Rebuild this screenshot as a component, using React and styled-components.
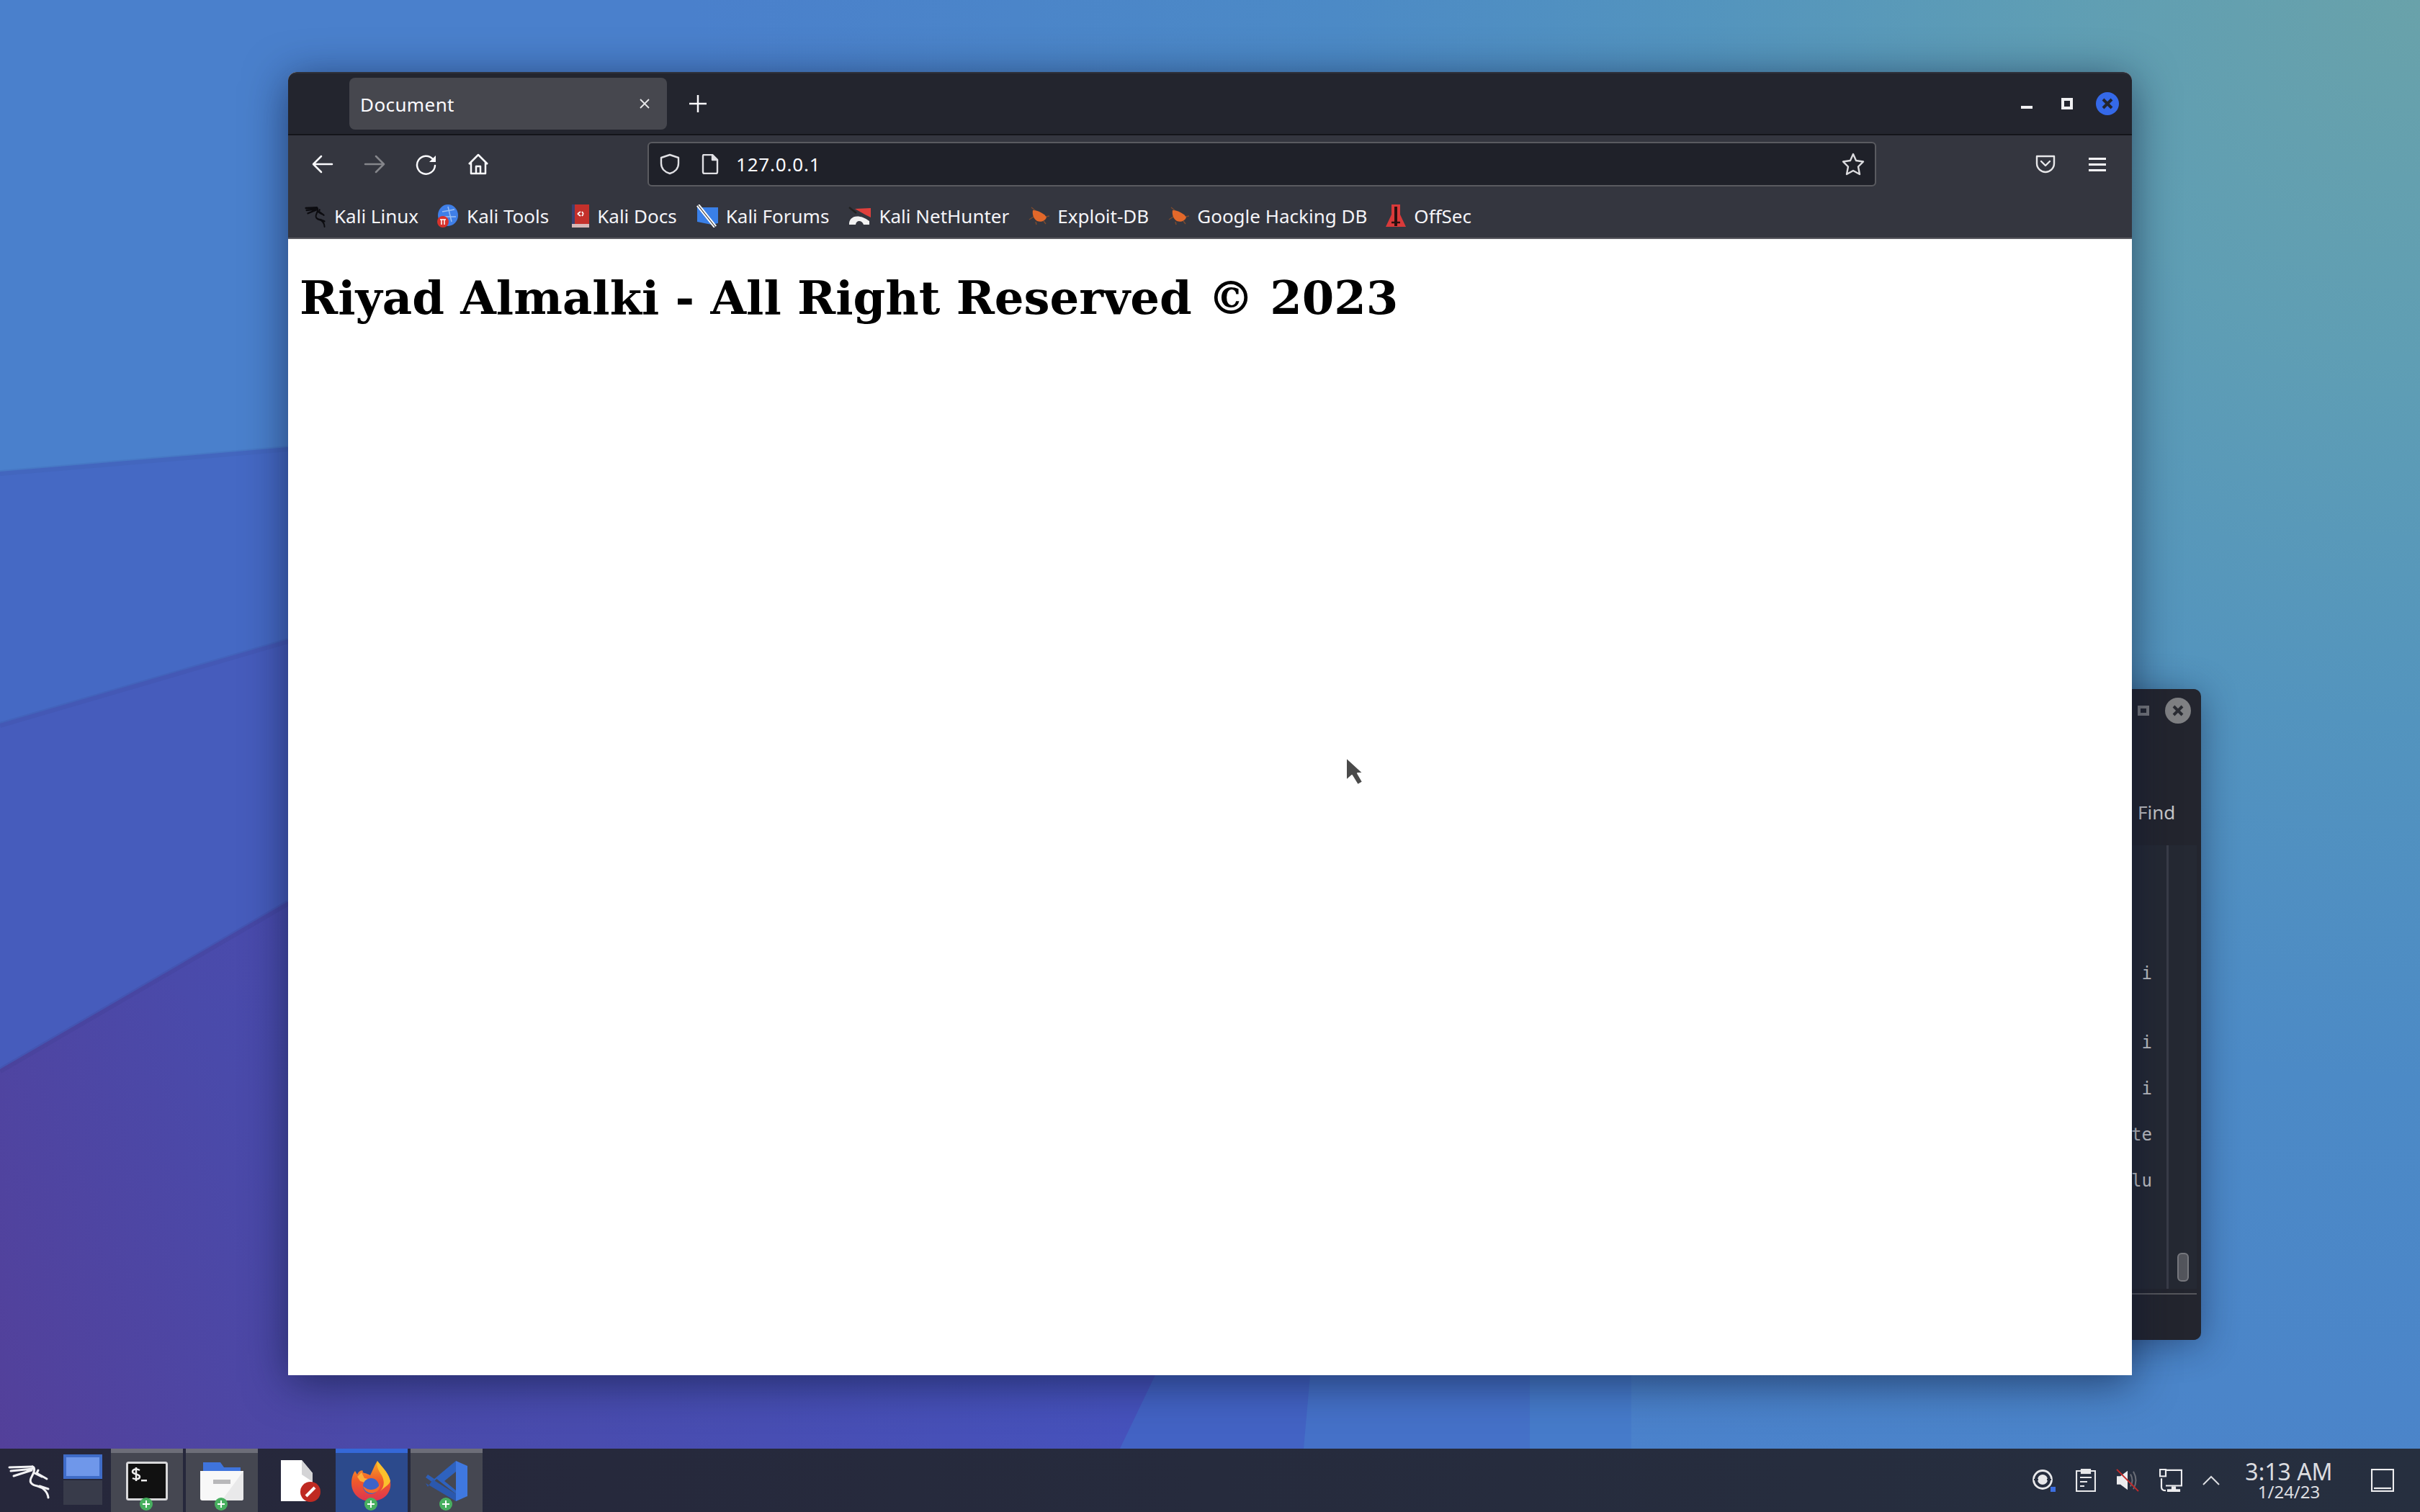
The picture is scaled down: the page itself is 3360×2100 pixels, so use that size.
import styled, { createGlobalStyle } from "styled-components"

const Global = createGlobalStyle`
html, body {
  margin: 0;
  padding: 0;
  background: #23252e;
}
* {
  box-sizing: border-box;
}
`

const Desktop = styled.div`
position: relative;
width: 3360px;
height: 2100px;
overflow: hidden;
display: flex;
flex-direction: column;
font-family: "Noto Sans", sans-serif;
background: radial-gradient(circle at 100% 0, #69a2aa 0, #5f9eb4 500px, #5394be 1000px, #4c8ac6 1500px, #4a80cc 2400px);
`

const Wallpaper = styled.svg`
position: absolute;
left: 0;
top: 0;
`

const Workspace = styled.div`
position: relative;
flex: 1;
`

/* window left behind the browser */
const BackWindow = styled.div`
position: absolute;
left: 2900px;
top: 957px;
width: 156px;
height: 904px;
display: flex;
flex-direction: column;
background: #23252e;
border-radius: 10px;
box-shadow: 0 6px 50px rgba(10, 20, 50, 0.45);
`

const BackTitle = styled.div`
height: 60px;
display: flex;
align-items: center;
justify-content: flex-end;
gap: 22px;
padding-right: 14px;
`

const BackMaximize = styled.span`
width: 16px;
height: 14px;
border: 4px solid #77787c;
`

const BackClose = styled.span`
width: 36px;
height: 36px;
border-radius: 50%;
background: #7f8083;
display: flex;
align-items: center;
justify-content: center;
`

const BackToolbar = styled.div`
height: 157px;
display: flex;
align-items: flex-end;
padding: 0 0 28px 68px;
color: #c9c9cb;
font-size: 26px;
`

const BackEditor = styled.div`
flex: 1;
margin-right: 6px;
background: #252933;
display: flex;
`

const Gutter = styled.div`
width: 111px;
flex: none;
border-right: 3px solid #3a3d48;
padding: 162px 20px 0 0;
font-family: "DejaVu Sans Mono", monospace;
font-size: 24px;
line-height: 32px;
color: #c9cacd;
text-align: right;
white-space: pre;
overflow: hidden;
`

const ScrollTrack = styled.div`
flex: 1;
display: flex;
align-items: flex-end;
justify-content: center;
padding: 0 0 10px 0;
`

const ScrollThumb = styled.div`
width: 16px;
height: 40px;
border-radius: 6px;
background: #53555c;
border: 2px solid #77787e;
`

const BackStatus = styled.div`
height: 65px;
margin: 6px 6px 0 0;
border-top: 2px solid #55565b;
`

/* browser */
const BrowserWindow = styled.div`
position: absolute;
left: 400px;
top: 100px;
width: 2560px;
height: 1810px;
display: flex;
flex-direction: column;
border-radius: 12px 12px 0 0;
background: #fff;
box-shadow: 0 10px 60px rgba(10, 20, 50, 0.6);
`

const TitleBar = styled.div`
height: 88px;
flex: none;
display: flex;
align-items: center;
padding: 0 18px 0 85px;
background: #23252e;
border-top: 2px solid #2e313b;
border-bottom: 2px solid #14151a;
border-radius: 12px 12px 0 0;
`

const Tab = styled.div`
width: 441px;
height: 72px;
display: flex;
align-items: center;
justify-content: space-between;
padding: 0 24px 0 15px;
background: #46474e;
border-radius: 8px;
color: #fbfbfe;
font-size: 26px;
letter-spacing: 0.4px;
`

const TabLabel = styled.span`
padding-top: 2px;
`

const NewTab = styled.svg`
margin-left: 31px;
`

const WindowControls = styled.div`
margin-left: auto;
display: flex;
align-items: center;
gap: 32px;
`

const Minimize = styled.svg`
margin-right: 8px;
`

const Toolbar = styled.div`
height: 80px;
flex: none;
display: flex;
align-items: center;
padding: 0 36px 0 33px;
background: #34363f;
`

const NavGroup = styled.div`
display: flex;
align-items: center;
gap: 42px;
width: 466px;
flex: none;
`

const UrlBar = styled.div`
width: 1706px;
height: 62px;
flex: none;
display: flex;
align-items: center;
padding: 0 14px 0 14px;
background: #1f2129;
border: 2px solid #5a5b60;
border-radius: 6px;
`

const UrlText = styled.span`
margin-left: 24px;
color: #fbfbfe;
font-size: 26px;
letter-spacing: 0.8px;
`

const PageGlyph = styled.svg`
margin-left: 29px;
`

const StarGlyph = styled.svg`
margin-left: auto;
`

const ToolbarEnd = styled.div`
margin-left: auto;
display: flex;
align-items: center;
gap: 46px;
`

const Bookmarks = styled.div`
height: 64px;
flex: none;
display: flex;
align-items: center;
gap: 26px;
padding: 4px 0 2px 23px;
background: #34363f;
border-bottom: 2px solid #5b5b62;
`

const Bookmark = styled.div`
display: flex;
align-items: center;
gap: 11px;
color: #f4f4f8;
font-size: 26px;
white-space: nowrap;
`

const Page = styled.main`
position: relative;
flex: 1;
background: #fff;
padding: 44px 16px 16px;
`

const Heading = styled.h1`
margin: 0;
font-family: "DejaVu Serif", serif;
font-size: 64px;
font-weight: bold;
color: #000;
`

const Cursor = styled.svg`
position: absolute;
left: 1467px;
top: 717px;
`

/* taskbar */
const Taskbar = styled.footer`
position: relative;
height: 88px;
flex: none;
display: flex;
align-items: stretch;
background: linear-gradient(90deg, #26273b, #262f3f);
`

const StartButton = styled.div`
width: 88px;
flex: none;
display: flex;
align-items: center;
padding-left: 10px;
`

const Pager = styled.div`
width: 54px;
flex: none;
display: flex;
flex-direction: column;
gap: 2px;
padding-top: 8px;
`

const PagerDesk = styled.div`
height: 34px;
background: ${p => (p.$active ? "#6f97ea" : "#383b4a")};
border: ${p => (p.$active ? "4px solid #3f6cc8" : "none")};
`

const Tasks = styled.div`
display: flex;
gap: 4px;
margin-left: 12px;
`

const Task = styled.div`
position: relative;
width: 100px;
display: flex;
align-items: center;
justify-content: center;
background: ${p => (p.$active ? "#2c4a8c" : p.$open ? "#454751" : "transparent")};
border-top: 6px solid ${p => (p.$active ? "#3568d8" : p.$open ? "#6d6e78" : "transparent")};
padding-bottom: 4px;
`

const DocIcon = styled.svg`
margin-left: 10px;
`

const PlusBadge = styled.span`
position: absolute;
left: 40px;
bottom: 2px;
width: 18px;
height: 18px;
border-radius: 50%;
background: #48b060;
color: #fff;
&::before, &::after {
  content: "";
  position: absolute;
  background: #fff;
}
&::before {
  left: 4px;
  top: 8px;
  width: 10px;
  height: 2px;
}
&::after {
  left: 8px;
  top: 4px;
  width: 2px;
  height: 10px;
}
`

const Tray = styled.div`
margin-left: auto;
display: flex;
align-items: center;
gap: 28px;
`

const Clock = styled.div`
width: 120px;
margin-left: 8px;
display: flex;
flex-direction: column;
align-items: center;
color: #dcdde0;
`

const ClockTime = styled.span`
font-size: 32px;
line-height: 32px;
white-space: nowrap;
`

const ClockDate = styled.span`
font-size: 24px;
line-height: 24px;
white-space: nowrap;
`

const ShowDesktop = styled.svg`
margin: 0 36px 0 26px;
`

const Dragon = ({ color, width, height, weight = 3 }) => (
  <svg width={width} height={height} viewBox="0 0 62 52" preserveAspectRatio="none" fill="none" stroke={color} strokeWidth={weight} strokeLinecap="round" strokeLinejoin="round">
    <path d="M3 8L35 7M5 13L36 10M9 20L34 12" />
    <path d="M35 7C41 9 35 19 33 23C30 30 36 33 42 34C50 36 56 42 57 50" />
    <path d="M43 12L41 16L55 24M38 16L48 21" />
    <path d="M45 34L57 38" />
  </svg>
)

const Bug = () => (
  <svg width="30" height="26" viewBox="0 0 30 26">
    <path d="M5 1L11 6M2 18L8 14M11 21L12 25M22 20L25 24M25 14L30 13" stroke="#7a4a30" strokeWidth="1.500" />
    <path d="M7 5C14 5 24 10 26 15C24 20 18 22 13 20C8 17 6 11 7 5Z" fill="#e2682a" />
  </svg>
)

const favicons = {
  linux: <Dragon color="#0c0c10" width="30" height="32" weight="4" />,
  tools: (
    <svg width="30" height="32" viewBox="0 0 30 32">
      <ellipse cx="15" cy="15" rx="14" ry="15" fill="#3f7fe8" />
      <path d="M7 10L24 7M10 17L26 17M15 3L20 24" stroke="#9cc0f2" strokeWidth="1.500" />
      <circle cx="8" cy="24" r="8" fill="#d8322c" />
      <path d="M4 21H12M6 21V28M10 21V28" stroke="#fff" strokeWidth="1.500" />
    </svg>
  ),
  docs: (
    <svg width="30" height="32" viewBox="-6 0 30 32">
      <rect x="0" y="0" width="24" height="27" fill="#c4302b" />
      <rect x="0" y="0" width="4" height="27" fill="#3a3f70" />
      <rect x="0" y="27" width="24" height="5" fill="#d8b8b8" />
      <path d="M8 13L12 10M8 13L12 16M16 13L14 10M16 13L14 16" stroke="#fff" strokeWidth="1.800" />
    </svg>
  ),
  forums: (
    <svg width="31" height="32" viewBox="0 0 31 32">
      <path d="M2 4H31V26L22 28L2 24Z" fill="#3a80e8" />
      <path d="M3 1L27 31" stroke="#fff" strokeWidth="5" />
      <path d="M3 1L27 31" stroke="#333" strokeWidth="1.200" />
    </svg>
  ),
  hunter: (
    <svg width="32" height="26" viewBox="0 0 32 26">
      <path d="M10 3L32 2V15L24 11Z" fill="#e0403c" />
      <path d="M2 25C1 14 14 8 30 20V25H22C20 19 12 18 11 25Z" fill="#f2f2f2" />
      <path d="M2 1L12 9" stroke="#222" strokeWidth="2.500" />
    </svg>
  ),
  bug: <Bug />,
  offsec: (
    <svg width="28" height="32" viewBox="0 0 28 32">
      <path d="M8 0H20V14L28 31H0L8 14Z" fill="#d93a3a" />
      <path d="M14 3V30" stroke="#2a1010" strokeWidth="4" />
      <path d="M8 25L20 25" stroke="#2a1010" strokeWidth="2.500" />
    </svg>
  ),
}

const bookmarks = [
  { icon: "linux", label: "Kali Linux" },
  { icon: "tools", label: "Kali Tools" },
  { icon: "docs", label: "Kali Docs" },
  { icon: "forums", label: "Kali Forums" },
  { icon: "hunter", label: "Kali NetHunter" },
  { icon: "bug", label: "Exploit-DB" },
  { icon: "bug", label: "Google Hacking DB" },
  { icon: "offsec", label: "OffSec" },
]

const gutterText = "i\n\n\ni\n\ni\n\nte\n\nlu"

const App = () => {
  return (
    <Desktop>
      <Global />
      <Wallpaper width="3360" height="2100" viewBox="0 0 3360 2100">
        <defs>
          <linearGradient id="deep" gradientUnits="userSpaceOnUse" x1="0" y1="2012" x2="1300" y2="1400">
            <stop offset="0" stopColor="#53409a" />
            <stop offset="0.35" stopColor="#4a4aaa" />
            <stop offset="1" stopColor="#4652bc" />
          </linearGradient>
        </defs>
        <polygon points="0,1000 2265,1000 2265,2012 0,2012" fill="#467bca" />
        <polygon points="0,1000 2124,1000 2124,2012 0,2012" fill="#4571c8" />
        <polygon points="0,1000 1900,1000 1810,2012 0,2012" fill="#4363c4" />
        <polygon points="0,655 400,621 800,600 800,1500 0,1500" fill="#4569c4" />
        <polygon points="0,1005 400,888 800,790 800,1500 0,1500" fill="#465cbc" />
        <polygon points="0,1485 400,1252 1700,1400 1700,1710 1555,2012 0,2012" fill="url(#deep)" />
        <polyline points="0,657 400,623" fill="none" stroke="#3c5aa8" strokeOpacity="0.2" strokeWidth="8" />
        <polyline points="0,1007 400,890" fill="none" stroke="#3c4c9c" strokeOpacity="0.2" strokeWidth="8" />
        <polyline points="0,1487 400,1254" fill="none" stroke="#3c3c8c" strokeOpacity="0.2" strokeWidth="8" />
      </Wallpaper>

      <Workspace>
        <BackWindow>
          <BackTitle>
            <BackMaximize />
            <BackClose>
              <svg width="16" height="16" viewBox="0 0 16 16" stroke="#2a2c33" strokeWidth="4">
                <path d="M2 2L14 14M14 2L2 14" />
              </svg>
            </BackClose>
          </BackTitle>
          <BackToolbar>Find</BackToolbar>
          <BackEditor>
            <Gutter>{gutterText}</Gutter>
            <ScrollTrack>
              <ScrollThumb />
            </ScrollTrack>
          </BackEditor>
          <BackStatus />
        </BackWindow>

        <BrowserWindow>
          <TitleBar>
            <Tab>
              <TabLabel>Document</TabLabel>
              <svg width="14" height="14" viewBox="0 0 14 14" stroke="#e8e8ea" strokeWidth="1.800">
                <path d="M1 1L13 13M13 1L1 13" />
              </svg>
            </Tab>
            <NewTab width="24" height="24" viewBox="0 0 24 24" stroke="#fbfbfe" strokeWidth="2.500">
              <path d="M12 0V24M0 12H24" />
            </NewTab>
            <WindowControls>
              <Minimize width="16" height="32" viewBox="0 0 16 32">
                <rect x="0" y="19" width="16" height="4" fill="#f0f0f2" />
              </Minimize>
              <svg width="16" height="16" viewBox="0 0 16 16" fill="none" stroke="#f0f0f2" strokeWidth="4">
                <rect x="2" y="2" width="12" height="12" />
              </svg>
              <svg width="32" height="32" viewBox="0 0 32 32">
                <circle cx="16" cy="16" r="16" fill="#3569e8" />
                <path d="M10 10L22 22M22 10L10 22" stroke="#23252e" strokeWidth="4" />
              </svg>
            </WindowControls>
          </TitleBar>

          <Toolbar>
            <NavGroup>
              <svg width="30" height="26" viewBox="0 0 30 26" fill="none" stroke="#fbfbfe" strokeWidth="2.500" strokeLinecap="round" strokeLinejoin="round">
                <path d="M28 13H3M13 2L2 13L13 24" />
              </svg>
              <svg width="30" height="26" viewBox="0 0 30 26" fill="none" stroke="#85868b" strokeWidth="2.500" strokeLinecap="round" strokeLinejoin="round">
                <path d="M2 13H27M17 2L28 13L17 24" />
              </svg>
              <svg width="30" height="30" viewBox="0 0 30 30" fill="none">
                <path d="M24 8A12.500 12.500 0 1 0 27 17" stroke="#fbfbfe" strokeWidth="2.500" strokeLinecap="round" />
                <path d="M28 3V12H19Z" fill="#fbfbfe" />
              </svg>
              <svg width="30" height="30" viewBox="0 0 30 30" fill="none" stroke="#fbfbfe" strokeWidth="2.500" strokeLinejoin="round">
                <path d="M2 15L15 2L28 15M5 12V28H25V12" />
                <path d="M12 28V18H18V28" />
              </svg>
            </NavGroup>
            <UrlBar>
              <svg width="30" height="30" viewBox="0 0 30 30" fill="none" stroke="#e0e0e4" strokeWidth="2.400" strokeLinejoin="round">
                <path d="M15 2L27 6V14C27 21 22 26 15 28C8 26 3 21 3 14V6Z" />
              </svg>
              <PageGlyph width="24" height="28" viewBox="0 0 24 28" fill="none" stroke="#e0e0e4" strokeWidth="2.400" strokeLinejoin="round">
                <path d="M3 1H15L22 8V25Q22 27 20 27H4Q2 27 2 25V3Q2 1 3 1Z" />
                <path d="M15 1V8H22Z" fill="#e0e0e4" />
              </PageGlyph>
              <UrlText>127.0.0.1</UrlText>
              <StarGlyph width="32" height="32" viewBox="0 0 32 32" fill="none" stroke="#dcdcdf" strokeWidth="2.400" strokeLinejoin="round">
                <path d="M16 2L20 11L30 12.500L23 19.500L25 30L16 25L7 30L9 19.500L2 12.500L12 11Z" />
              </StarGlyph>
            </UrlBar>
            <ToolbarEnd>
              <svg width="28" height="26" viewBox="0 0 28 26" fill="none" stroke="#e8e8ea" strokeWidth="2.400" strokeLinecap="round" strokeLinejoin="round">
                <path d="M2 2H26V12C26 19 20 24 14 24C8 24 2 19 2 12Z" />
                <path d="M8 9L14 15L20 9" />
              </svg>
              <svg width="24" height="20" viewBox="0 0 24 20" fill="#fbfbfe">
                <rect x="0" y="1" width="24" height="3" />
                <rect x="0" y="9" width="24" height="3" />
                <rect x="0" y="17" width="24" height="3" />
              </svg>
            </ToolbarEnd>
          </Toolbar>

          <Bookmarks>
            {bookmarks.map(b => (
              <Bookmark key={b.label}>
                {favicons[b.icon]}
                {b.label}
              </Bookmark>
            ))}
          </Bookmarks>

          <Page>
            <Heading>Riyad Almalki - All Right Reserved © 2023</Heading>
            <Cursor width="28" height="44" viewBox="0 0 28 44">
              <path d="M2 3V35L10 28L18 41L25 37L18 25H26Z" fill="#4a4a4a" stroke="#fff" strokeWidth="2" strokeLinejoin="round" />
            </Cursor>
          </Page>
        </BrowserWindow>
      </Workspace>

      <Taskbar>
        <StartButton>
          <Dragon color="#f2f2f4" width="62" height="52" />
        </StartButton>
        <Pager>
          <PagerDesk $active />
          <PagerDesk />
        </Pager>
        <Tasks>
          <Task $open>
            <svg width="58" height="54" viewBox="0 0 58 54">
              <rect x="1.500" y="1.500" width="55" height="51" rx="2" fill="#111" stroke="#d8d8da" strokeWidth="3" />
              <path d="M19 12C14 9 9 11 9 14C9 18 19 17 19 21C19 25 13 25 9 23M14 8V27" stroke="#eee" strokeWidth="2.500" fill="none" />
              <rect x="21" y="25" width="8" height="2.500" fill="#eee" />
            </svg>
            <PlusBadge />
          </Task>
          <Task $open>
            <svg width="60" height="56" viewBox="0 0 60 56">
              <path d="M4 2H28L33 9H56V20H4Z" fill="#3f74dc" />
              <path d="M0 14H60V52Q60 55 57 55H3Q0 55 0 52Z" fill="#f8f8f8" />
              <path d="M60 14V52Q60 55 57 55H30Z" fill="#e9e9ea" />
              <rect x="18" y="26" width="24" height="6" fill="#b8b8ba" />
            </svg>
            <PlusBadge />
          </Task>
          <Task>
            <DocIcon width="56" height="58" viewBox="0 0 56 58">
              <path d="M1 0H30L45 18V57H1Z" fill="#fff" />
              <path d="M30 0L45 18V30L30 20Z" fill="#d4d4d6" />
              <circle cx="42" cy="44" r="14" fill="#bf2a22" />
              <path d="M36 50L48 38" stroke="#fff" strokeWidth="4" />
            </DocIcon>
          </Task>
          <Task $active>
            <svg width="56" height="56" viewBox="0 0 56 56">
              <defs>
                <linearGradient id="fox" x1="0" y1="0" x2="0" y2="1">
                  <stop offset="0" stopColor="#f9a825" />
                  <stop offset="0.5" stopColor="#f05a2a" />
                  <stop offset="1" stopColor="#dd3352" />
                </linearGradient>
              </defs>
              <path d="M36 0C36 6 42 8 47 14C55 24 57 36 50 46C44 54 34 56 26 56C12 56 0 46 0 31C0 24 2 18 5 14L8 19C10 14 14 12 16 14C14 18 20 16 26 20C30 12 32 6 36 0Z" fill="url(#fox)" />
              <path d="M36 0C34 8 38 14 42 20C46 28 46 36 40 42C46 36 52 34 54 28C52 18 44 10 36 0Z" fill="#fbc02d" />
              <path d="M8 22L14 16L18 24L28 26L18 30L12 28Z" fill="#fbb03b" />
              <circle cx="27" cy="35" r="11" fill="#3d63c8" />
              <path d="M16 35A12 12 0 0 0 40 30C38 40 26 44 16 35Z" fill="#f36b2a" />
            </svg>
            <PlusBadge />
          </Task>
          <Task $open>
            <svg width="58" height="56" viewBox="0 0 58 56">
              <path d="M42 0L58 7V49L42 56Z" fill="#3f78e0" />
              <path d="M42 0L10 30L0 23L3 19L12 25L42 0Z" fill="#2e5fb8" />
              <path d="M42 0L14 24L42 46Z" fill="#2e62bf" />
              <path d="M42 56L0 31L3 36L10 26L42 46Z" fill="#2b58ad" />
              <path d="M26 28L42 15V41Z" fill="#454751" />
            </svg>
            <PlusBadge />
          </Task>
        </Tasks>
        <Tray>
          <svg width="32" height="32" viewBox="0 0 32 32" fill="none">
            <circle cx="14" cy="15" r="12.500" stroke="#e8e8ea" strokeWidth="2.800" />
            <circle cx="14" cy="15" r="7" fill="#e8e8ea" />
            <path d="M2 15H8M20 15H26" stroke="#262f3f" strokeWidth="2" />
            <rect x="25" y="25" width="7" height="7" fill="#3d6fe0" />
          </svg>
          <svg width="28" height="32" viewBox="0 0 28 32" fill="none" stroke="#e8e8ea" strokeWidth="2.200">
            <path d="M8 3H1V31H27V3H20" />
            <rect x="8" y="1" width="12" height="5" fill="#e8e8ea" />
            <path d="M6 12H22M6 18H16M6 24H12" />
          </svg>
          <svg width="32" height="32" viewBox="0 0 32 34" preserveAspectRatio="none" fill="none">
            <path d="M1 11H6L16 3V31L6 23H1Z" fill="#ededef" />
            <path d="M20 8Q25 17 20 26M24 4Q31 17 24 30" stroke="#6a6d76" strokeWidth="2" />
            <path d="M1 1L31 33" stroke="#c22a2a" strokeWidth="2" />
          </svg>
          <svg width="32" height="32" viewBox="0 0 32 34" preserveAspectRatio="none" fill="none" stroke="#ededef" strokeWidth="2.200">
            <rect x="1" y="1" width="8" height="10" />
            <path d="M9 2H31V25H9" />
            <path d="M3 14V27Q3 32 9 32" />
            <path d="M18 26V31H12V33H28V31H22V26" fill="#ededef" />
          </svg>
          <svg width="24" height="14" viewBox="0 0 24 14" fill="none" stroke="#dcdde0" strokeWidth="2">
            <path d="M1 13L12 2L23 13" />
          </svg>
          <Clock>
            <ClockTime>3:13 AM</ClockTime>
            <ClockDate>1/24/23</ClockDate>
          </Clock>
          <ShowDesktop width="32" height="32" viewBox="0 0 32 32" fill="none" stroke="#ededef" strokeWidth="2.200">
            <rect x="1" y="1" width="30" height="30" />
            <path d="M4 27H28" />
          </ShowDesktop>
        </Tray>
      </Taskbar>
    </Desktop>
  );
}

export default App;
